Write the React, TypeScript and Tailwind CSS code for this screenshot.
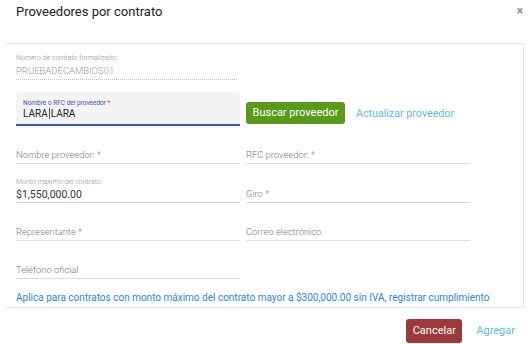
import React from 'react'

// underlined form field, Material style
function Field({ label, value, placeholder, height = 'h-[38px]' }: { label?: string; value?: string; placeholder?: string; height?: string }) {
  return (
    <div className={`${height} w-[224px] flex flex-col justify-end border-b border-[#dcdcdc] pb-[1px]`}>
      {label && <div className="text-[7px] leading-[8px] font-light text-[#8a8a8a] mb-[3px]">{label}</div>}
      {value ? (
        <div className="text-[10.5px] leading-[12px] text-[#333]">{value}</div>
      ) : (
        <div className="text-[9.4px] leading-[12px] font-light text-[#7a7a7a] mb-[1px]">{placeholder}</div>
      )}
    </div>
  )
}

export default function App() {
  return (
    <div className="w-[531px] h-[344px] bg-white relative overflow-hidden" style={{ fontFamily: 'Roboto, "Liberation Sans", sans-serif' }}>
      {/* Header */}
      <div className="px-[16px] pt-[3px] h-[43px]">
        <h2 className="text-[13px] leading-[18px] text-[#222]">Proveedores por contrato</h2>
      </div>
      <button className="absolute top-[5px] right-[8px] text-[12px] leading-[12px] font-bold text-[#8a8a8a]">×</button>

      {/* Body */}
      <div className="ml-[6px] mr-[7px] border-t border-r border-b border-[#e6e6e6] pl-[10px] pt-[10px] pb-[3px]">
        <div className="w-[221px] border-b border-dotted border-[#bdbdbd] pb-[2px]">
          <div className="text-[7px] leading-[8px] font-light text-[#8a8a8a] mb-[3px]">Número de contrato formalizado:</div>
          <div className="text-[9.5px] leading-[12px] font-light text-[#9a9a9a]">PRUEBADECAMBIOS01</div>
        </div>

        <div className="flex items-end gap-[6px] mt-[12px]">
          <div className="w-[224px] h-[34px] bg-[#f4f4f4] rounded-t-[3px] border-b-2 border-[#3f51b5] px-[7px] pt-[7px]">
            <div className="text-[6.5px] leading-[8px] text-[#3f51b5]">
              Nombre o RFC del proveedor <span className="text-[#e53935]">*</span>
            </div>
            <div className="text-[10px] leading-[13px] text-[#222] flex items-center">
              LARA<span className="inline-block w-[1px] h-[11px] bg-[#3f51b5] mx-[1px]"></span>LARA
            </div>
          </div>
          <button className="h-[22px] w-[99px] mb-[2px] bg-[#5a9a1b] rounded-[3px] text-white text-[11px]">Buscar proveedor</button>
          <button className="ml-[5px] mb-[6px] text-[10.7px] leading-[13px] text-[#64b5f6]">Actualizar proveedor</button>
        </div>

        <div className="flex gap-[6px]">
          <Field placeholder="Nombre proveedor: *" />
          <Field placeholder="RFC proveedor: *" />
        </div>
        <div className="flex gap-[6px]">
          <Field label="Monto máximo del contrato:" value="$1,550,000.00" height="h-[39px]" />
          <Field placeholder="Giro *" height="h-[39px]" />
        </div>
        <div className="flex gap-[6px]">
          <Field placeholder="Representante *" />
          <Field placeholder="Correo electrónico" />
        </div>
        <div className="flex gap-[6px]">
          <Field placeholder="Teléfono oficial" />
        </div>

        <p className="mt-[12px] text-[10px] leading-[13px] text-[#1e88e5]">
          Aplica para contratos con monto máximo del contrato mayor a $300,000.00 sin IVA, registrar cumplimiento
        </p>
      </div>

      {/* Footer */}
      <div className="flex justify-end items-center gap-[14px] pr-[16px] pt-[11px]">
        <button className="h-[24px] w-[56px] bg-[#9c3a3a] rounded-[3px] text-white text-[11px]">Cancelar</button>
        <button className="text-[11px] text-[#64b5f6]">Agregar</button>
      </div>
    </div>
  )
}
